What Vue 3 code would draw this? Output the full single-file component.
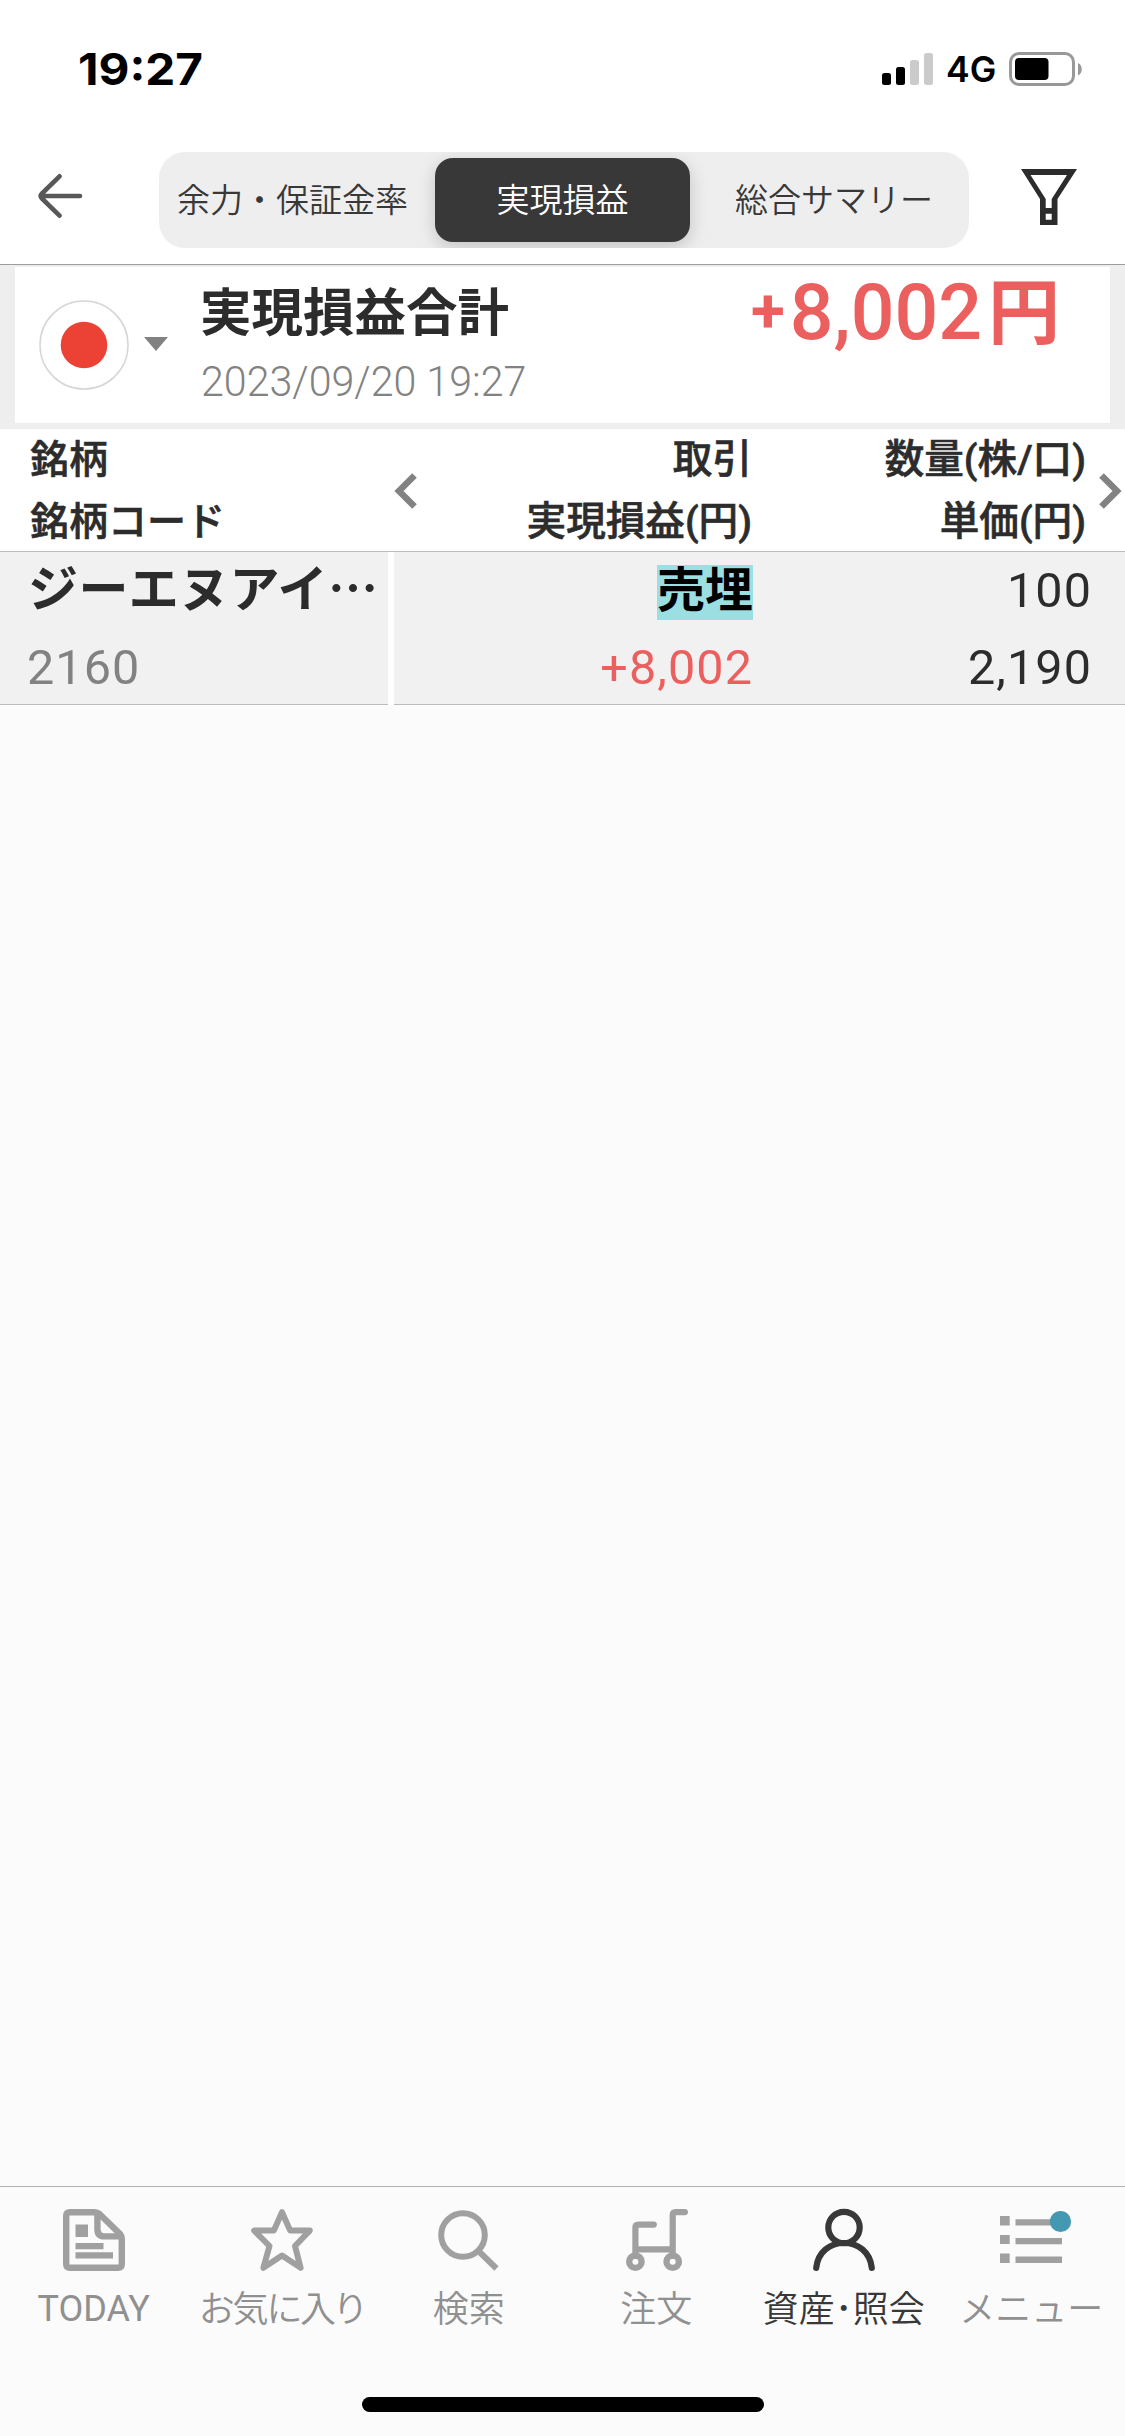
<script setup>
const segments = [
  { label: '余力・保証金率', active: false },
  { label: '実現損益', active: true },
  { label: '総合サマリー', active: false },
]
const tabs = [
  { id: 'today', label: 'TODAY' },
  { id: 'fav', label: 'お気に入り' },
  { id: 'search', label: '検索' },
  { id: 'order', label: '注文' },
  { id: 'asset', label: '資産･照会', active: true },
  { id: 'menu', label: 'メニュー' },
]
</script>

<template>
  <div class="screen">
    <header class="top">
      <div class="status">
        <span class="time">19:27</span>
        <div class="status-right">
          <svg class="signal" width="52" height="36" viewBox="0 0 52 36">
            <rect x="0" y="22" width="9" height="12" rx="2.500" />
            <rect x="14" y="16" width="9" height="18" rx="2.500" />
            <g fill="#cbcbcb">
              <rect x="28" y="9" width="9" height="25" rx="2.500" />
              <rect x="42" y="2" width="9" height="32" rx="2.500" />
            </g>
          </svg>
          <span class="net">4G</span>
          <svg class="battery" width="74" height="34" viewBox="0 0 74 34">
            <rect x="1.500" y="1.500" width="63" height="31" rx="8.500" fill="none" stroke="#999" stroke-width="3" />
            <rect x="6" y="6" width="33.500" height="22" rx="4" />
            <path d="M69 11c5 2 5 10.500 0 12.500z" fill="#999" />
          </svg>
        </div>
      </div>
      <div class="nav">
        <svg class="back" width="46" height="50" viewBox="0 0 46 50" fill="none" stroke="#585858" stroke-width="4.600" stroke-linecap="round" stroke-linejoin="round">
          <path d="M22.500 5.300L5 22.500Q2.500 25 5 27.500L22.500 44.700M4 25H43" />
        </svg>
        <div class="segmented">
          <div v-for="s in segments" :key="s.label" class="seg" :class="{ on: s.active }">{{ s.label }}</div>
        </div>
        <svg class="filter" width="56" height="56" viewBox="0 0 56 56">
          <path fill="#2c2c2c" fill-rule="evenodd" d="M0 0H56L36.500 30V56H19V30zM9.500 6L24.700 30V39H30.700V30L46 6zM24.700 44.700V50.700H30.700V44.700z" />
        </svg>
      </div>
    </header>

    <section class="summary">
      <div class="card">
        <svg class="flag" width="90" height="90" viewBox="0 0 90 90">
          <circle cx="45" cy="45" r="44" fill="#fff" stroke="#d6d6d6" stroke-width="1.500" />
          <circle cx="45" cy="45" r="23.300" fill="#ec4236" />
        </svg>
        <svg class="caret" width="24" height="14" viewBox="0 0 24 14"><path d="M0 0H24L12 14z" fill="#828282" /></svg>
        <div class="heading">
          <div class="title">実現損益合計</div>
          <div class="date"><span>2023/09/20 19:27</span></div>
        </div>
        <div class="amount"><span class="num"><span class="sign">+</span>8,002</span><span class="yen">円</span></div>
      </div>
    </section>

    <section class="thead">
      <div class="c1"><div>銘柄</div><div>銘柄コード</div></div>
      <svg class="chev" width="24" height="36" viewBox="0 0 24 36"><path d="M20.500 2.500L5 18L20.500 33.500" fill="none" stroke="#828282" stroke-width="6.500" /></svg>
      <div class="c2"><div>取引</div><div>実現損益(円)</div></div>
      <div class="c3"><div>数量(株/口)</div><div>単価(円)</div></div>
      <svg class="chev right" width="24" height="36" viewBox="0 0 24 36"><path d="M3.500 2.500L19 18L3.500 33.500" fill="none" stroke="#828282" stroke-width="6.500" /></svg>
    </section>

    <section class="row">
      <div class="name-cell">
        <div class="name">ジーエヌアイ…</div>
        <div class="code">2160</div>
      </div>
      <div class="data">
        <div class="d2">
          <div class="line"><span class="tag">売埋</span></div>
          <div class="line plus">+8,002</div>
        </div>
        <div class="d3">
          <div class="line">100</div>
          <div class="line">2,190</div>
        </div>
      </div>
    </section>

    <main class="empty"></main>

    <footer class="tabbar">
      <div class="tabs">
        <div v-for="t in tabs" :key="t.id" class="tab" :class="[t.id, { active: t.active }]">
          <svg class="icon" width="62" height="62" viewBox="0 0 62 62" fill="none" stroke="currentColor" stroke-width="6.400">
            <template v-if="t.id === 'today'">
              <path d="M7 3.200H31.500Q34.500 3.200 36.500 5L57 25Q58.800 27 58.800 30V55Q58.800 58.800 55 58.800H7Q3.200 58.800 3.200 55V7Q3.200 3.200 7 3.200z" />
              <path d="M34.400 4V20Q34.400 27.400 41.500 27.400H58" />
              <path d="M12.500 15.500H25V28H12.500zM12.500 34H40.500V40.300H12.500zM12.500 43.300H50V49.500H12.500z" fill="currentColor" stroke="none" />
            </template>
            <path v-else-if="t.id === 'fav'" d="M31 3.200L39.200 21.600H58.800L44 37L49.600 58.800L31 46.500L12.400 58.800L18.500 37L3.200 21.600H22.800z" stroke-width="6" stroke-linejoin="round" />
            <template v-else-if="t.id === 'search'">
              <circle cx="25" cy="26" r="21.800" stroke-width="6" />
              <path d="M40.500 42L58.500 59.500" stroke-width="6" />
            </template>
            <template v-else-if="t.id === 'order'">
              <circle cx="9.400" cy="52.700" r="6.200" />
              <circle cx="46.700" cy="52.700" r="6.200" />
              <path d="M9.400 47V18.500Q9.400 15.600 12.300 15.600H27.800M9.400 40.300H46.700M46.700 47V6Q46.700 3.100 49.600 3.100H58.900" stroke-linecap="round" stroke-width="6.200" />
            </template>
            <template v-else-if="t.id === 'asset'">
              <circle cx="31" cy="18.500" r="15.700" stroke-width="6.200" />
              <path d="M3.200 58.800C5 43 17 34 31 34S57 43 58.800 58.800" stroke-linecap="round" stroke-width="6.200" />
            </template>
            <template v-else>
              <path d="M0 7H9.700V16.500H0zM0 26H9.700V35H0zM0 44.500H9.700V54H0zM15.500 10.200H62V16.500H15.500zM15.500 29H62V35.200H15.500zM15.500 47.500H62V54H15.500z" fill="currentColor" stroke="none" />
              <circle cx="60.500" cy="12.500" r="10.600" fill="#4498b1" stroke="none" />
            </template>
          </svg>
          <span class="label">{{ t.label }}</span>
        </div>
      </div>
      <div class="home"></div>
    </footer>
  </div>
</template>

<style>
body { margin: 0; background: #fbfbfb; }
</style>

<style scoped>
.screen {
  width: 1125px;
  height: 2436px;
  display: flex;
  flex-direction: column;
  background: #fbfbfb;
  color: #2c2c2c;
  font-family: Roboto, "Noto Sans CJK JP", sans-serif;
  overflow: hidden;
  white-space: nowrap;
}
.top { height: 265px; flex: none; box-sizing: border-box; background: #fff; border-bottom: 1px solid #9c9c9c; }
.status { height: 138px; box-sizing: border-box; padding: 0 42px 0 78px; display: flex; justify-content: space-between; align-items: center; color: #000; }
.time { font: 700 44.500px/60px Inter, sans-serif; transform: scaleX(1.07); transform-origin: 0 50%; }
.status-right { display: flex; align-items: center; }
.net { font: 600 35.500px/42px Inter, sans-serif; width: 51px; margin: 2px 12px 0 12px; }
.signal, .battery, .back, .filter, .flag, .caret, .chev, .icon { display: block; flex: none; }
.nav { display: flex; align-items: flex-start; padding: 14px 48px 0 37px; }
.back { margin-top: 19px; }
.segmented { width: 810px; height: 96px; flex: none; margin-left: 76px; box-sizing: border-box; padding: 6px; display: flex; gap: 15px; background: #eee; border-radius: 26px; overflow: hidden; }
.seg { width: 255px; height: 84px; text-align: center; font: 350 33px/81px "Noto Sans CJK JP", sans-serif; color: #383838; }
.seg:last-child { width: 258px; }
.seg.on { background: #383838; color: #fff; border-radius: 18px; box-shadow: 0 5px 18px rgba(0, 0, 0, .18); }
.filter { margin-left: 52px; margin-top: 17px; }

.summary { height: 164px; flex: none; box-sizing: border-box; padding: 2px 15px 6px; background: #eee; }
.card { height: 156px; display: flex; background: #fff; }
.flag { margin: 33px 0 0 24px; }
.caret { margin: 70px 0 0 15px; }
.heading { margin-left: 33px; width: 420px; }
.title { margin-top: 5px; margin-left: -1px; height: 74px; font: 700 51.500px/74px "Noto Sans CJK JP", sans-serif; }
.date { height: 56px; color: #828282; font-weight: 300; font-size: 43px; line-height: 56px; margin-top: 7px; }
.date span { display: inline-block; transform: scaleX(.957); transform-origin: 0 50%; }
.amount { flex: 1; display: flex; justify-content: flex-end; padding-right: 50px; color: #eb605e; height: 92px; }
.num { font-size: 77px; font-weight: 500; line-height: 92px; }
.sign { font-size: 62px; line-height: 1; vertical-align: 7px; margin-right: 5px; font-weight: 700; }
.yen { font: 700 72px/80px "Noto Sans CJK JP", sans-serif; margin-left: 6px; }

.thead { height: 123px; flex: none; box-sizing: border-box; display: flex; background: #fff; border-bottom: 1px solid #bcbcbc; font-size: 39.600px; line-height: 62px; font-weight: 500; -webkit-text-stroke: .600px #2c2c2c; }
.c1 { width: 364px; padding-left: 30px; font-size: 39px; }
.chev { margin-top: 44px; }
.c2 { width: 334px; text-align: right; }
.c3 { width: 334px; text-align: right; }
.right { margin-left: 12px; }

.row { height: 153px; flex: none; display: flex; gap: 6px; background: #fff; font-size: 48.500px; line-height: 77px; letter-spacing: 1.100px; }
.name-cell { width: 388px; box-sizing: border-box; padding-left: 28px; background: #f1f1f1; border-bottom: 1px solid #bcbcbc; }
.name { height: 77px; font: 700 50px/67px "Noto Sans CJK JP", sans-serif; letter-spacing: .400px; }
.code { color: #828282; margin-left: -1px; }
.data { flex: 1; display: flex; box-sizing: border-box; background: #f1f1f1; border-bottom: 1px solid #bcbcbc; }
.d2 { width: 359px; }
.d3 { width: 339px; }
.line { height: 77px; display: flex; justify-content: flex-end; }
.tag { margin-top: 13px; background: #9bdfe2; color: #000; font-weight: 700; font-size: 48px; line-height: 51px; height: 55px; letter-spacing: 0; }
.plus { color: #eb605e; }

.empty { flex: 1; }
.tabbar { height: 250px; flex: none; box-sizing: border-box; border-top: 1px solid #b0b0b0; }
.tabs { display: flex; height: 210px; }
.tab { width: 187.500px; padding-top: 22px; box-sizing: border-box; display: flex; flex-direction: column; align-items: center; color: #a0a0a0; }
.icon { overflow: visible; margin-left: 1px; }
.menu .icon { margin-left: 0; }
.label { margin-top: 9px; color: #909090; font: 350 36px/52px "Noto Sans CJK JP", sans-serif; }
.today .label { font: 400 36px/58px Roboto, sans-serif; }
.fav .label { font-feature-settings: "palt"; letter-spacing: -1.500px; }
.active, .active .label { color: #383838; }
.home { width: 402px; height: 15px; margin: 0 auto; border-radius: 8px; background: #000; }
</style>
